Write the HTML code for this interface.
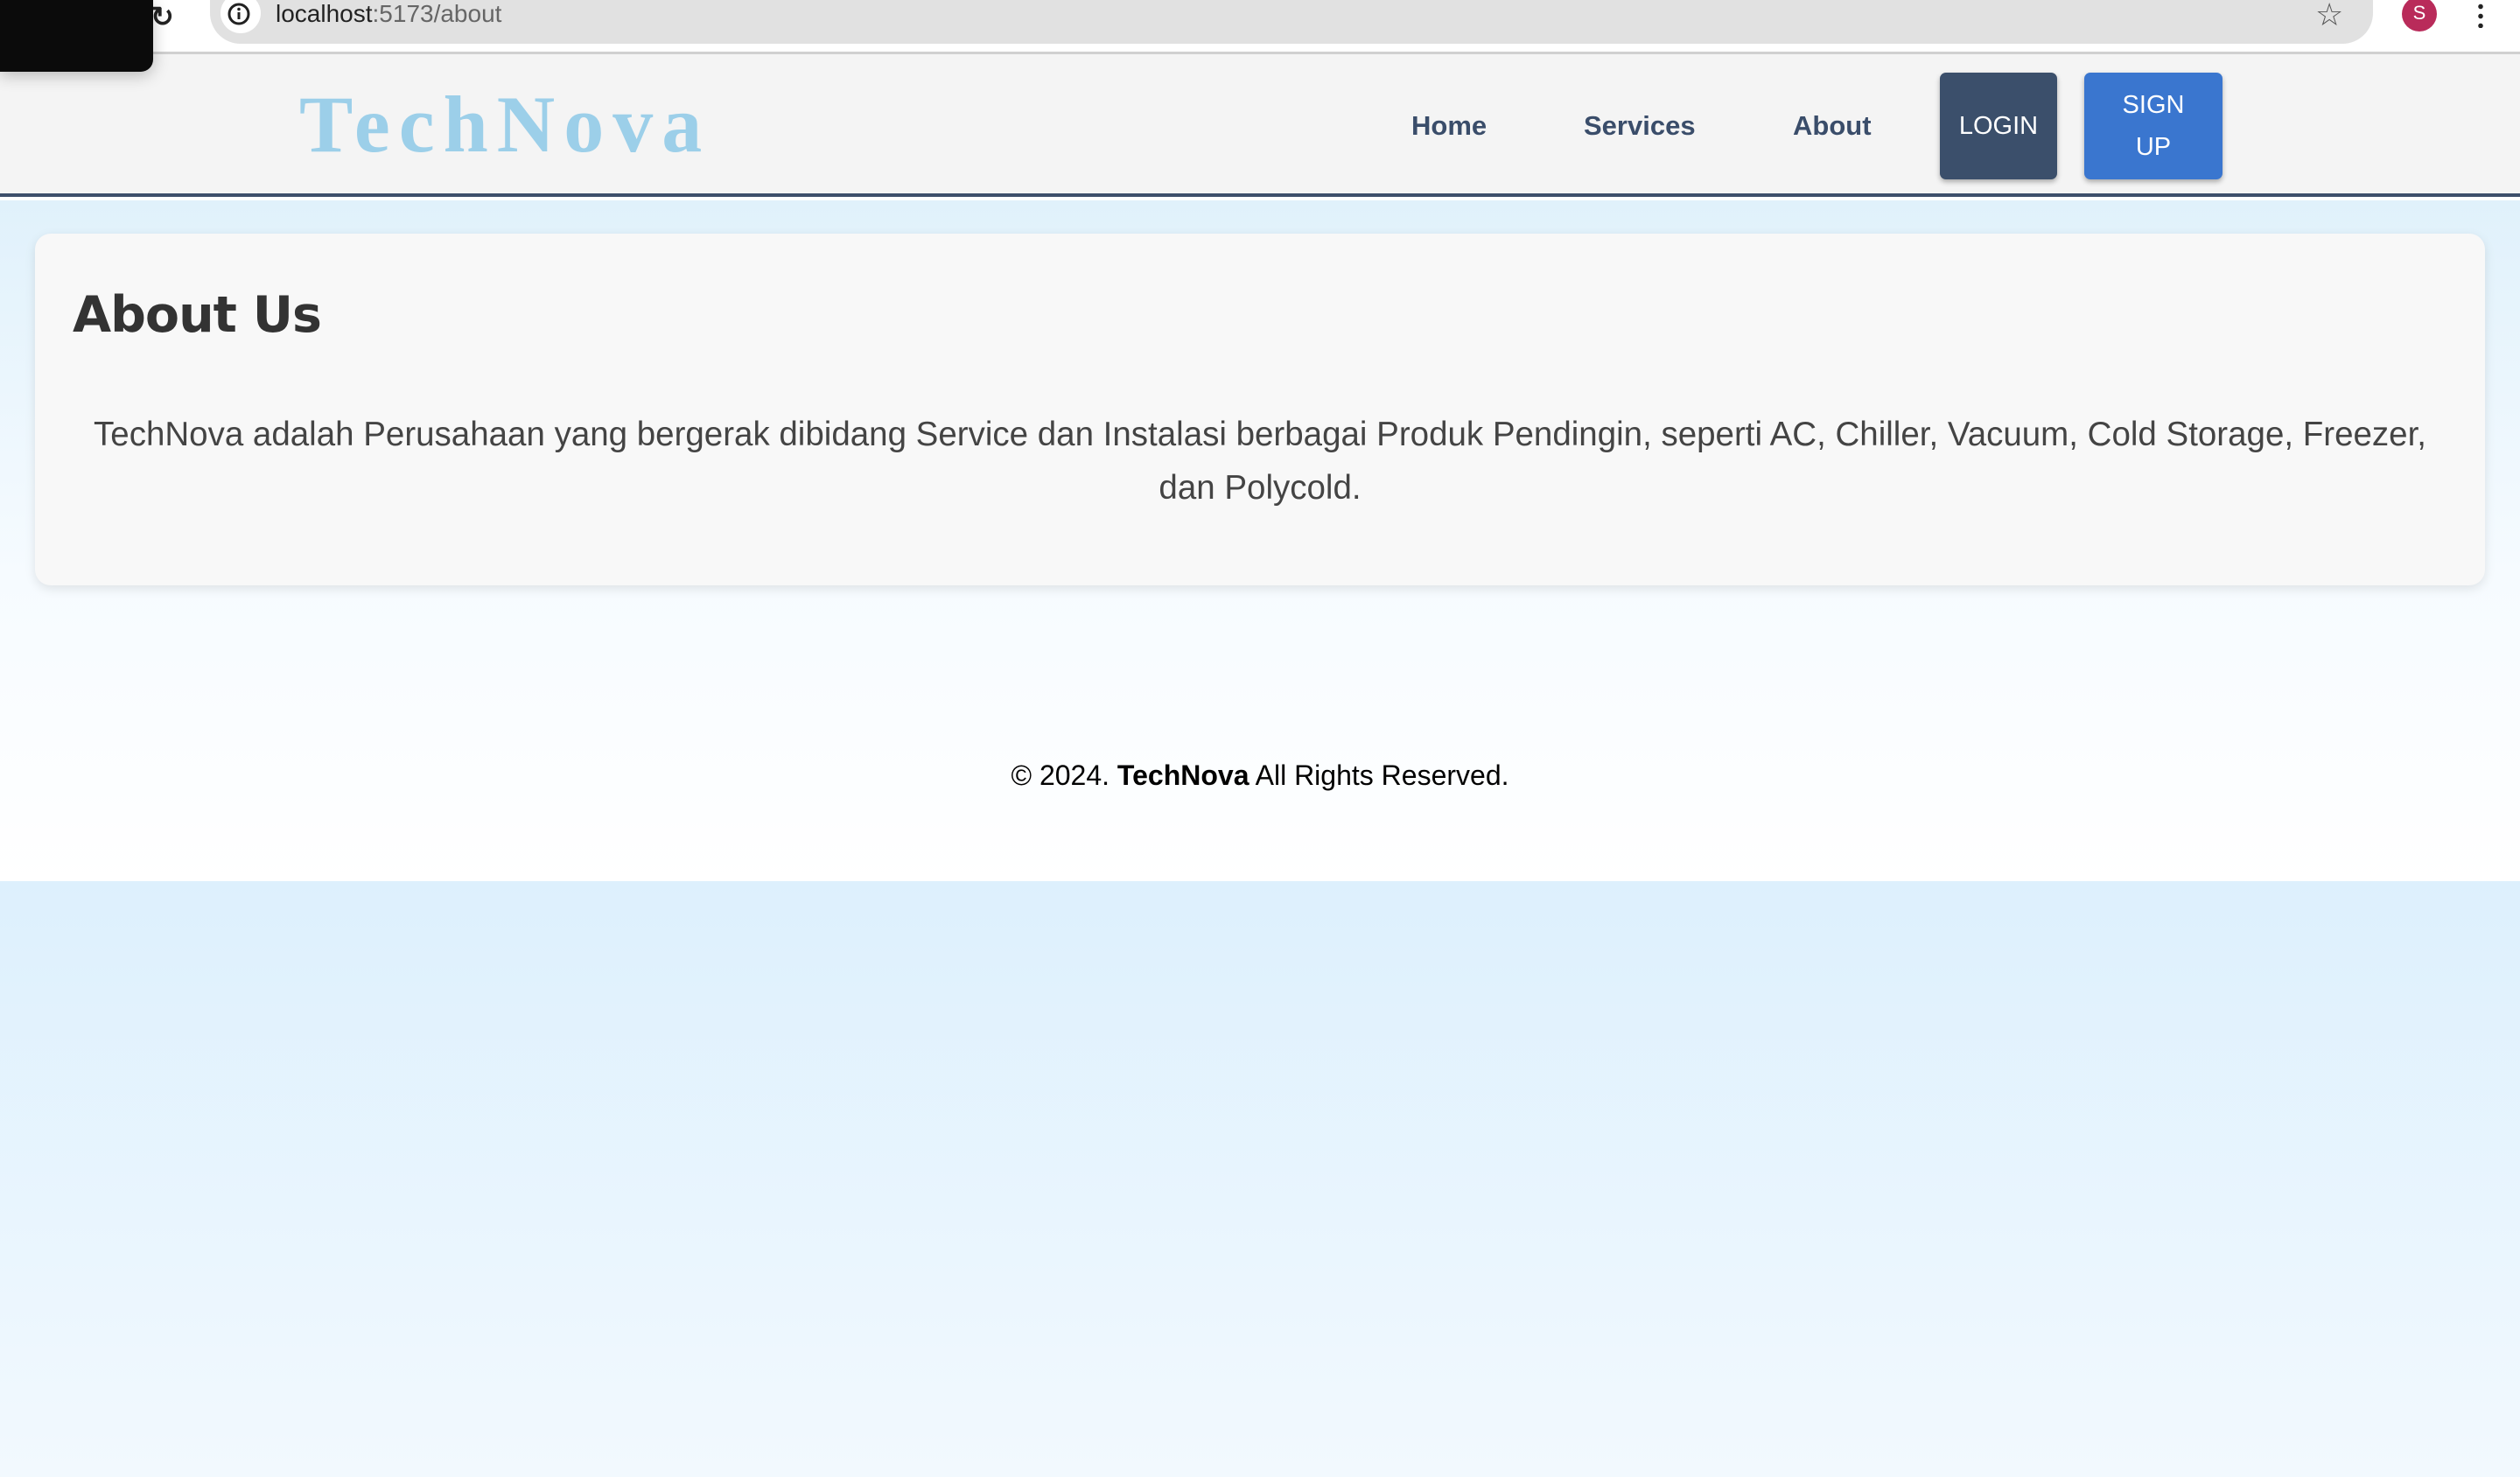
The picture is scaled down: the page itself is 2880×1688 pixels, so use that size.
<!DOCTYPE html>
<html><head><meta charset="utf-8"><style>
*{margin:0;padding:0;box-sizing:border-box}
html,body{width:2880px;height:1688px;overflow:hidden}
body{font-family:"Liberation Sans",Arial,sans-serif;background:#fff;position:relative}
.bottom{position:absolute;left:0;top:1007px;width:2880px;height:681px;background:linear-gradient(#ddf0fd,#f2f9fe)}
.chrome{position:absolute;left:0;top:0;width:2880px;height:62px;background:#fff;border-bottom:3px solid #d0d0d0}
.addr{position:absolute;left:240px;top:-20px;width:2472px;height:70px;background:#e1e1e1;border-radius:0 0 35px 35px}
.info{position:absolute;left:252px;top:-8px;width:46px;height:46px;border-radius:50%;background:#fff}
.url{position:absolute;left:315px;top:0px;font-size:28px;color:#222}
.url span{color:#666}
.blk{position:absolute;left:0;top:0;width:175px;height:82px;background:#0b0b0b;border-radius:0 0 14px 0;box-shadow:0 4px 18px rgba(0,0,0,.25);z-index:5}
header{position:absolute;left:0;top:62px;width:2880px;height:163px;background:#f4f4f4;border-bottom:4px solid #3d4f6b}
.logo{position:absolute;left:342px;top:34px;font-family:"Liberation Serif","Times New Roman",serif;font-weight:bold;font-size:92px;color:#9ccfe9;letter-spacing:10px;line-height:1}
.nav{position:absolute;top:64px;font-size:31px;font-weight:bold;color:#3a4d6a}
.btn{position:absolute;top:21px;height:122px;border-radius:7px;color:#fff;font-size:29px;display:flex;align-items:center;justify-content:center;text-align:center;line-height:48px;box-shadow:0 3px 6px rgba(0,0,0,.3)}
main{position:absolute;left:0;top:229px;width:2880px;height:778px;background:linear-gradient(#e0f1fb,#f6fbff 55%,#fff)}
.card{position:absolute;left:40px;top:38px;width:2800px;height:402px;background:#f8f8f8;border-radius:18px;box-shadow:0 4px 12px rgba(0,0,0,.1)}
h1{position:absolute;left:43px;top:60px;font-family:"Comic Sans MS","DejaVu Sans",sans-serif;font-weight:bold;font-size:57px;color:#333;letter-spacing:-1px}
p{position:absolute;left:60px;right:60px;top:199px;text-align:center;font-size:38.5px;line-height:61px;color:#444}
.foot{position:absolute;left:0;width:2880px;top:868px;text-align:center;font-size:32px;color:#000}
</style></head><body>
<div class="bottom"></div>
<div class="blk"></div>
<div class="chrome">
 <div style="position:absolute;left:172px;top:0px;font-size:32px;color:#222;font-weight:bold">&#x21bb;</div>
 <div class="addr"></div>
 <div class="info"><svg width="46" height="46" viewBox="0 0 46 46"><circle cx="21" cy="24" r="11" fill="none" stroke="#222" stroke-width="3"/><rect x="19.5" y="22" width="3" height="8" fill="#222"/><circle cx="21" cy="18.5" r="1.8" fill="#222"/></svg></div>
 <div class="url">localhost<span>:5173/about</span></div>
 <div style="position:absolute;left:2646px;top:-4px;font-size:36px;color:#555">&#x2606;</div>
 <div style="position:absolute;left:2745px;top:-4px;width:40px;height:40px;border-radius:50%;background:#b92b5a;color:#fff;font-size:22px;text-align:center;line-height:38px">S</div>
 <div style="position:absolute;left:2832px;top:2px;width:6px;height:30px;background:radial-gradient(circle,#222 2.5px,transparent 3px) 0 0/6px 11px"></div>
</div>
<header>
 <div class="logo">TechNova</div>
 <div class="nav" style="left:1613px">Home</div>
 <div class="nav" style="left:1810px">Services</div>
 <div class="nav" style="left:2049px">About</div>
 <div class="btn" style="left:2217px;width:134px;background:#3b4f6b">LOGIN</div>
 <div class="btn" style="left:2382px;width:158px;background:#3a76cf">SIGN<br>UP</div>
</header>
<main>
 <div class="card">
  <h1>About Us</h1>
  <p>TechNova adalah Perusahaan yang bergerak dibidang Service dan Instalasi berbagai Produk Pendingin, seperti AC, Chiller, Vacuum, Cold Storage, Freezer, dan Polycold.</p>
 </div>
</main>
<div class="foot">© 2024. <b>TechNova</b> All Rights Reserved.</div>
</body></html>
